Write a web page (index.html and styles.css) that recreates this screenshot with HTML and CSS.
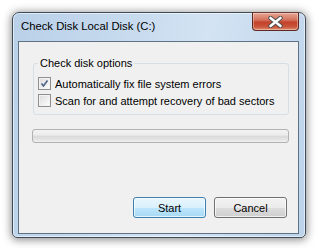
FILE: index.html
```html
<!DOCTYPE html>
<html>
<head>
<meta charset="utf-8">
<link rel="stylesheet" href="styles.css">
</head>
<body>
<div class="stage">
  <div class="window">
    <div class="titlebar">
      <span class="title">Check Disk Local Disk (C:)</span>
      <button class="close" aria-label="Close">
        <svg width="15" height="12" viewBox="0 0 15 12">
          <path d="M2.5 2 L12.5 10 M12.5 2 L2.5 10" stroke="#4a4a4a" stroke-width="4.4" stroke-linecap="round"/>
          <path d="M2.5 2 L12.5 10 M12.5 2 L2.5 10" stroke="#ffffff" stroke-width="2.6" stroke-linecap="round"/>
        </svg>
      </button>
    </div>
    <div class="client">
      <fieldset class="group">
        <legend class="legend">Check disk options</legend>
        <label class="option"><span class="box checked"><svg width="11" height="11" viewBox="0 0 11 11"><path d="M2.5 5.5 L4.5 8 L8.5 2.5" fill="none" stroke="#4d6185" stroke-width="1.6"/></svg></span>Automatically fix file system errors</label>
        <label class="option"><span class="box"></span>Scan for and attempt recovery of bad sectors</label>
      </fieldset>
      <div class="progress"></div>
      <div class="actions">
        <button class="btn default">Start</button>
        <button class="btn">Cancel</button>
      </div>
    </div>
  </div>
</div>
</body>
</html>
```
FILE: styles.css
```css
* {
  box-sizing: border-box;
}
html, body {
  margin: 0;
  padding: 0;
  background: #ffffff;
}
body {
  width: 318px;
  height: 248px;
  overflow: hidden;
  font-family: "Liberation Sans", Arial, sans-serif;
  font-size: 11px;
  color: #000;
}
.stage {
  padding: 12px 0 0 12px;
}
.window {
  width: 294px;
  height: 226px;
  border: 1px solid #3f4c5a;
  border-radius: 7px 7px 5px 5px;
  background: linear-gradient(100deg, #b9d0e8 0%, #c9dcef 40%, #d3e3f3 60%, #bcd3ea 100%);
  box-shadow: inset 0 0 0 1px rgba(255,255,255,0.55), 0 1px 9px 1px rgba(0,0,0,0.45);
  padding: 0 6px 3px 5px;
  display: flex;
  flex-direction: column;
}
.titlebar {
  height: 28px;
  flex: none;
  display: flex;
  justify-content: space-between;
  align-items: flex-start;
}
.title {
  font-size: 11.3px;
  margin: 7px 0 0 3px;
  color: #000;
}
.close {
  width: 47px;
  height: 19px;
  margin: -1px 0 0 0;
  border: 1px solid #5e2a20;
  border-top-color: #6a3a30;
  border-radius: 0 0 4px 4px;
  background: linear-gradient(to bottom, #e8a593 0%, #d4735f 40%, #c4422a 55%, #c9553b 80%, #de8c6f 100%);
  box-shadow: inset 0 0 0 1px rgba(255,255,255,0.35);
  padding: 0;
  display: flex;
  align-items: center;
  justify-content: center;
}
.client {
  flex: 1;
  border: 1px solid #5f7185;
  background: #f0f0f0;
  display: flex;
  flex-direction: column;
  padding: 15px 9px 15px 14px;
}
.group {
  margin: 0;
  border: 1px solid #d5dfe5;
  border-radius: 3px;
  padding: 7px 4px 7px 4px;
  display: flex;
  flex-direction: column;
  gap: 4px;
}
.legend {
  padding: 0 2px;
  margin-left: 0;
  line-height: 13px;
}
.option {
  display: flex;
  align-items: center;
  gap: 4px;
  height: 13px;
  white-space: nowrap;
}
.box {
  width: 13px;
  height: 13px;
  border: 1px solid #8f8f8f;
  background: linear-gradient(135deg, #dcdcdc 0%, #f0f0f0 60%, #ffffff 100%);
  box-shadow: inset 0 0 0 1px #f4f4f4;
  display: flex;
  align-items: center;
  justify-content: center;
  flex: none;
}
.progress {
  margin: 14px 0 0 -1px;
  height: 14px;
  flex: none;
  border: 1px solid #b2b2b2;
  border-radius: 3px;
  background: linear-gradient(to bottom, #f3f3f3 0%, #ececec 40%, #dadada 55%, #e2e2e2 75%, #f0f0f0 100%);
}
.actions {
  margin-top: auto;
  display: flex;
  justify-content: flex-end;
  gap: 8px;
  padding-right: 2px;
}
.btn {
  width: 73px;
  height: 21px;
  font-family: inherit;
  font-size: 11px;
  color: #000;
  border: 1px solid #707070;
  border-radius: 3px;
  background: linear-gradient(to bottom, #f2f2f2 0%, #ebebeb 50%, #dddddd 51%, #cfcfcf 100%);
  box-shadow: inset 0 0 0 1px rgba(255,255,255,0.7);
  padding: 0;
}
.btn.default {
  border-color: #3c7fb1;
  background: linear-gradient(to bottom, #eaf6fd 0%, #d9f0fc 50%, #bee6fd 51%, #a7d9f5 100%);
}
```
